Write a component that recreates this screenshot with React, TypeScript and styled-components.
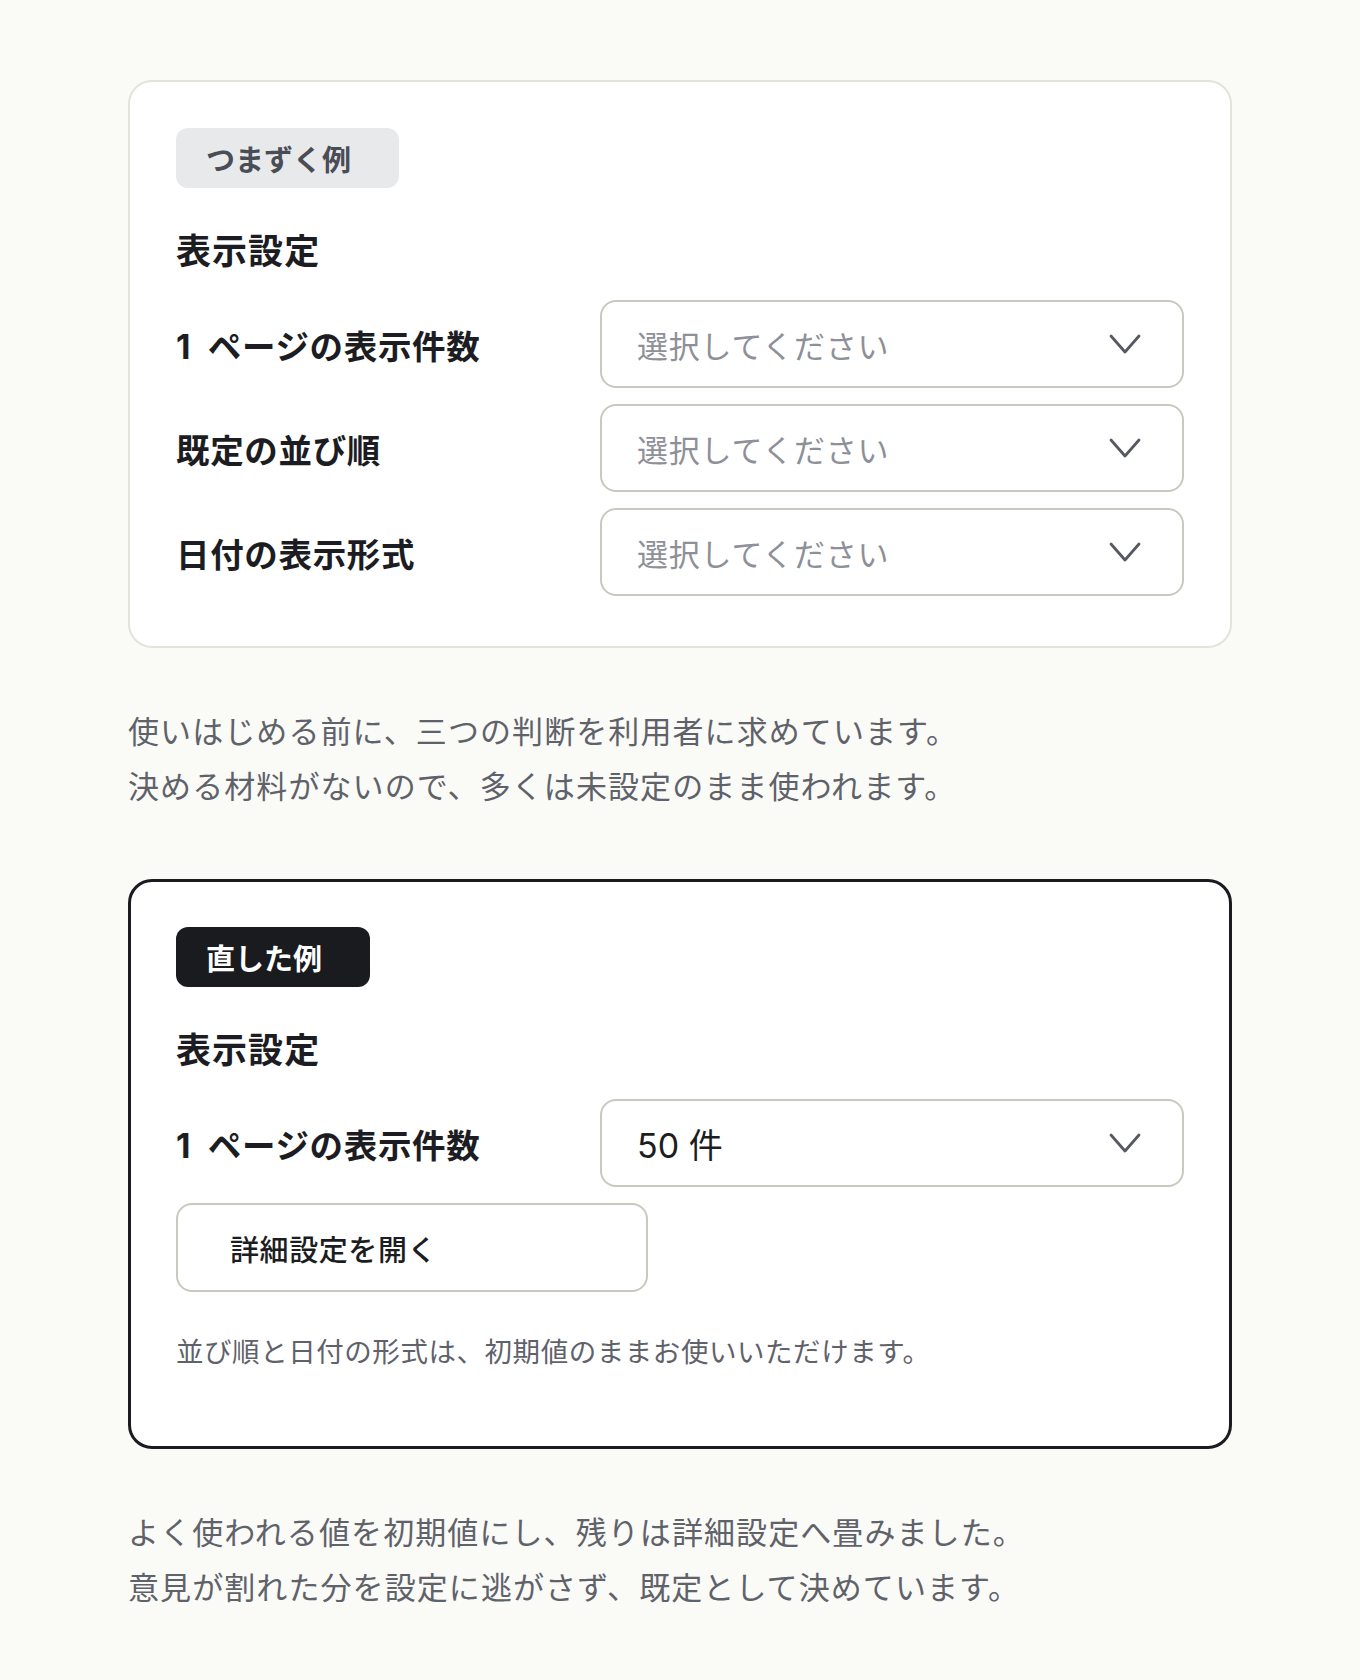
import React from 'react';
import styled, { createGlobalStyle } from 'styled-components';

const GlobalStyle = createGlobalStyle`
  html, body {
    margin: 0;
    padding: 0;
    background: #fafaf6;
  }
  body {
    font-family: "Inter", "Noto Sans CJK JP", sans-serif;
    color: #1c1d22;
  }
`;

interface Field {
  label: string;
  value?: string;
}

const looseFields: Field[] = [
  { label: '1 ページの表示件数' },
  { label: '既定の並び順' },
  { label: '日付の表示形式' },
];

export default function App(): JSX.Element {
  return (
    <Page>
      <GlobalStyle />
      <Card>
        <Badge>つまずく例</Badge>
        <Heading>表示設定</Heading>
        <FieldGrid>
          {looseFields.map((field) => (
            <FieldRow key={field.label} label={field.label} />
          ))}
        </FieldGrid>
      </Card>

      <Explanation>
        使いはじめる前に、三つの判断を利用者に求めています。
        <br />
        決める材料がないので、多くは未設定のまま使われます。
      </Explanation>

      <Card $strong={true}>
        <Badge $dark={true}>直した例</Badge>
        <Heading>表示設定</Heading>
        <FieldGrid>
          <FieldRow label="1 ページの表示件数" value="50 件" />
        </FieldGrid>
        <DetailButton type="button">詳細設定を開く</DetailButton>
        <Note>並び順と日付の形式は、初期値のままお使いいただけます。</Note>
      </Card>

      <Explanation>
        よく使われる値を初期値にし、残りは詳細設定へ畳みました。
        <br />
        意見が割れた分を設定に逃がさず、既定として決めています。
      </Explanation>
    </Page>
  );
}

function FieldRow(props: Field): JSX.Element {
  return (
    <>
      <Label>{props.label}</Label>
      <SelectBox role="combobox" aria-label={props.label}>
        {props.value ? (
          <SelectValue>{props.value}</SelectValue>
        ) : (
          <Placeholder>選択してください</Placeholder>
        )}
        <Chevron width="32" height="20" viewBox="0 0 32 20" aria-hidden="true">
          <polyline points="2,2 16,18 30,2" />
        </Chevron>
      </SelectBox>
    </>
  );
}

const Page = styled.main`
  box-sizing: border-box;
  min-height: 1680px;
  padding: 80px 128px 60px;
  display: flex;
  flex-direction: column;
`;

const Card = styled.section<{ $strong?: boolean }>`
  box-sizing: border-box;
  width: 1104px;
  background: #ffffff;
  border: ${(p) => (p.$strong ? '3px solid #1a1b1f' : '2px solid #e3e3da')};
  border-radius: 24px;
  padding: ${(p) => (p.$strong ? '45px 45px 70px' : '46px 46px 50px')};
  display: flex;
  flex-direction: column;
  align-items: flex-start;
`;

const Badge = styled.span<{ $dark?: boolean }>`
  box-sizing: border-box;
  height: 60px;
  display: inline-flex;
  align-items: center;
  padding: 0 48px 0 30px;
  border-radius: 12px;
  font-size: 29px;
  font-weight: 600;
  background: ${(p) => (p.$dark ? '#1a1b1f' : '#e8e9eb')};
  color: ${(p) => (p.$dark ? '#ffffff' : '#4a4d55')};
`;

const Heading = styled.h2`
  margin: 39px 0 25px;
  font-size: 35px;
  line-height: 48px;
  font-weight: 700;
  letter-spacing: 0.03em;
  color: #1c1d22;
`;

const FieldGrid = styled.div`
  width: 100%;
  display: grid;
  grid-template-columns: 400px 1fr;
  column-gap: 24px;
  row-gap: 16px;
  align-items: center;
`;

const Label = styled.div`
  font-size: 33.5px;
  font-weight: 700;
  letter-spacing: 0.02em;
  word-spacing: 8px;
  color: #1c1d22;
  white-space: nowrap;
`;

const SelectBox = styled.div`
  box-sizing: border-box;
  height: 88px;
  border: 2px solid #c9c9bf;
  border-radius: 16px;
  background: #ffffff;
  display: flex;
  align-items: center;
  justify-content: space-between;
  padding: 0 41px 0 35px;
`;

const Placeholder = styled.span`
  font-size: 31px;
  letter-spacing: 0.025em;
  color: #8e9099;
`;

const SelectValue = styled.span`
  font-size: 34px;
  color: #1c1d22;
`;

const Chevron = styled.svg`
  flex: none;
  fill: none;
  stroke: #565862;
  stroke-width: 2.8;
  stroke-linecap: round;
  stroke-linejoin: round;
`;

const DetailButton = styled.button`
  box-sizing: border-box;
  margin-top: 16px;
  width: 472px;
  height: 89px;
  border: 2px solid #c9c9bf;
  border-radius: 16px;
  background: #ffffff;
  padding: 0 0 0 52px;
  text-align: left;
  font-family: inherit;
  font-size: 29px;
  font-weight: 500;
  letter-spacing: 0.02em;
  color: #1c1d22;
  cursor: pointer;
`;

const Note = styled.p`
  margin: 36px 0 0;
  font-size: 27.5px;
  line-height: 48px;
  letter-spacing: 0.02em;
  color: #5f626b;
`;

const Explanation = styled.p`
  margin: 56px 0 65px;
  font-size: 31px;
  line-height: 55px;
  letter-spacing: 0.035em;
  color: #5f626b;
`;
